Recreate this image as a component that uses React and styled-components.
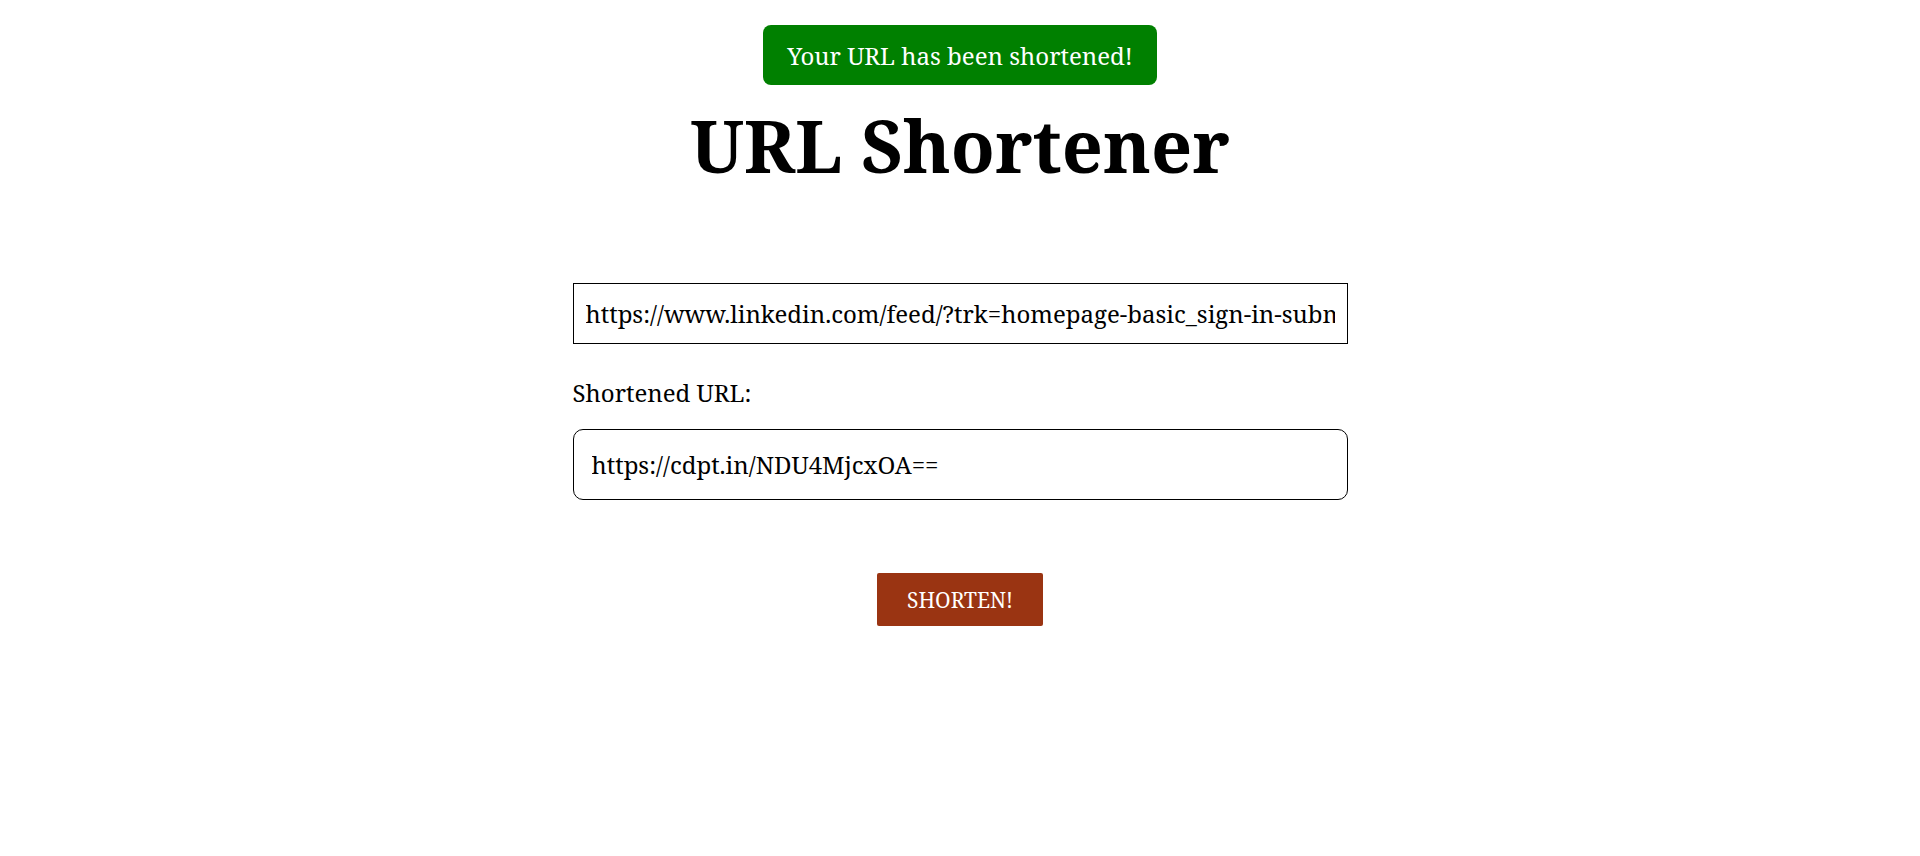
import React from "react";
import styled, { createGlobalStyle } from "styled-components";

const GlobalStyle = createGlobalStyle`
  html, body {
    margin: 0;
    padding: 0;
    background: #ffffff;
    font-family: "Noto Serif", "DejaVu Serif", "Liberation Serif", serif;
    color: #000;
  }
`;

const Page = styled.main`
  display: flex;
  flex-direction: column;
  align-items: center;
  padding-top: 25px;
`;

const Toast = styled.div`
  background: #008000;
  color: #ffffff;
  font-size: 24px;
  border-radius: 8px;
  height: 60px;
  padding: 0 24px;
  display: flex;
  align-items: center;
  justify-content: center;
  box-sizing: border-box;
  white-space: nowrap;
`;

const Title = styled.h1`
  margin: 11px 0 0;
  font-size: 72px;
  font-weight: 700;
  line-height: 98px;
`;

const Form = styled.form`
  width: 775px;
  margin-top: 89px;
  display: flex;
  flex-direction: column;
`;

const UrlInput = styled.input`
  box-sizing: border-box;
  width: 100%;
  height: ${(p) => (p.$rounded ? "71px" : "61px")};
  border: 1px solid #000;
  border-radius: ${(p) => (p.$rounded ? "10px" : "0")};
  padding: ${(p) => (p.$rounded ? "0 18px" : "0 12px")};
  font-family: inherit;
  font-size: 24px;
  color: #000;
  background: #fff;
  outline: none;
`;

const Label = styled.label`
  font-size: 24px;
  margin: 32px 0 20px;
  display: block;
`;

const Actions = styled.div`
  display: flex;
  justify-content: center;
  margin-top: 73px;
`;

const Button = styled.button`
  width: 166px;
  height: 53px;
  background: #9a3412;
  color: #fff;
  border: none;
  border-radius: 2px;
  font-family: inherit;
  font-size: 21px;
  text-transform: uppercase;
  cursor: pointer;
`;

export default function App() {
  return (
    <>
      <GlobalStyle />
      <Page>
        <Toast>Your URL has been shortened!</Toast>
        <Title>URL Shortener</Title>
        <Form onSubmit={(e) => e.preventDefault()}>
          <UrlInput
            type="text"
            readOnly
            value="https://www.linkedin.com/feed/?trk=homepage-basic_sign-in-submit"
          />
          <Label htmlFor="short">Shortened URL:</Label>
          <UrlInput id="short" $rounded type="text" readOnly value="https://cdpt.in/NDU4MjcxOA==" />
          <Actions>
            <Button type="submit">Shorten!</Button>
          </Actions>
        </Form>
      </Page>
    </>
  );
}
